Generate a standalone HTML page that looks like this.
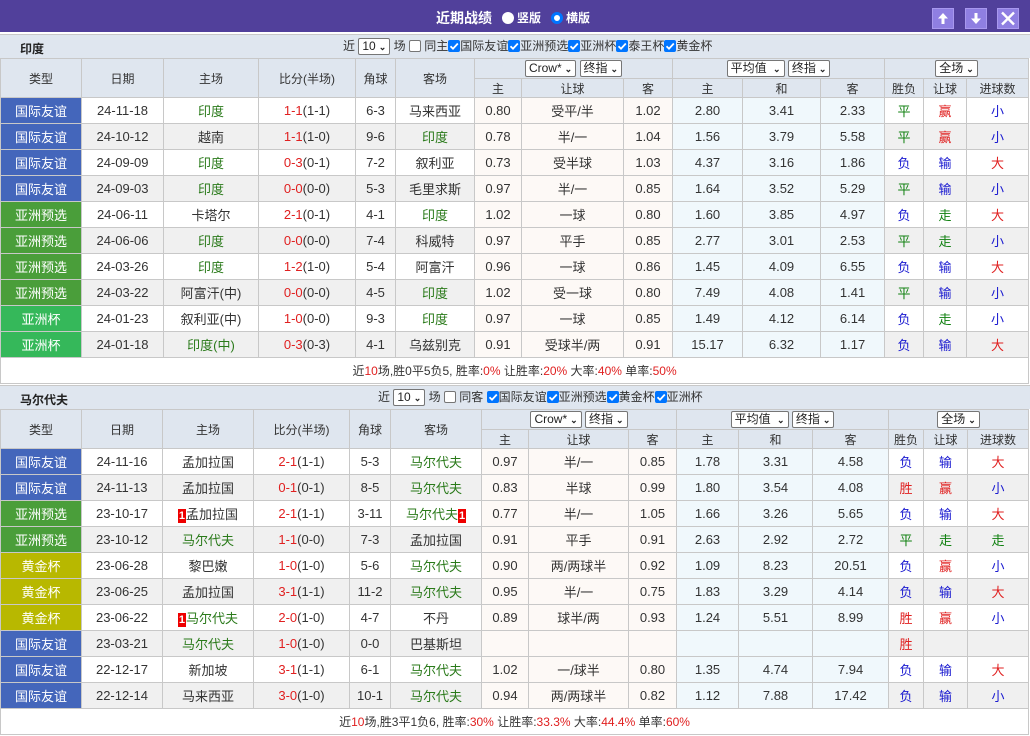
<!DOCTYPE html>
<html><head><meta charset="utf-8">
<style>
*{box-sizing:border-box;margin:0;padding:0}
body{width:1030px;height:736px;background:#fff;font-family:"Liberation Sans","Noto Sans CJK SC",sans-serif;font-size:12px;color:#333;position:relative;overflow:hidden}
.top{position:absolute;left:0;top:0;width:1030px;height:32px;background:#51409b}
.top .t{position:absolute;left:436px;top:8px;color:#fff;font-weight:bold;font-size:14px}
.top .r{position:absolute;top:9px;color:#fff;font-size:12px;font-weight:bold}
.rad{display:inline-block;width:12px;height:12px;border-radius:50%;vertical-align:-2px;margin-right:3px}
.btn{position:absolute;top:8px;width:22px;height:21px;background:#8f7fe2;border:1px solid #a898ee}
.btn svg{display:block}
.bar{position:absolute;left:0;width:1030px;height:24px;background:#dfe6ef;border-top:1px solid #c8c8c8}
.bar b{position:absolute;left:20px;top:5px;font-size:12px;color:#222}
.ctl{position:absolute;top:3px;font-size:12px;color:#333;white-space:nowrap;line-height:17px}
.sel{display:inline-block;border:1px solid #767676;background:#fff;height:17px;line-height:15px;padding:0 3px;font-size:12px;color:#222;border-radius:2px;vertical-align:middle}
.sel i{font-style:normal;font-size:9px;font-weight:bold;margin-left:3px}
.cb{display:inline-block;width:12px;height:12px;vertical-align:-2px;border-radius:2px}
.cb svg{display:block}
.cb.on{background:#0075ff}
.cb.off{border:1px solid #767676;background:#fff}
table{position:absolute;left:0;border-collapse:collapse;table-layout:fixed;width:1028px}
td{border:1px solid #c8c8c8;text-align:center;height:26px;padding:0;white-space:nowrap;overflow:hidden;font-size:13px;color:#333}
tr.h td{background:#dfe6ef;height:20px;color:#333;font-size:12px}
tr.h2 td{height:19px}
tr.g td{background:#f0f0f0}
td.ty{color:#fff!important}
.b1{background:#4466bb!important}.b2{background:#4a9e3a!important}.b3{background:#35b85a!important}.b4{background:#b8b800!important}
td.p{background:#fdf9f6!important}td.q{background:#f0f8fc!important}
.gr{color:#2a7a1a}.rd{color:#e02020}.bl{color:#1a1ad0}.gn{color:#108010}
.sum td{height:26px;background:#fff!important;font-size:12px}
.n{display:inline-block;background:#e00;color:#fff;font-size:11px;font-weight:bold;width:8px;line-height:14px}
</style></head><body>
<div class="top">
<span class="t">近期战绩</span>
<span class="r" style="left:502px"><span class="rad" style="background:#fff"></span>竖版</span>
<span class="r" style="left:551px"><span class="rad" style="background:#fff;border:3px solid #0075ff"></span>横版</span>
<div class="btn" style="left:932px"><svg width="20" height="19"><path d="M10 4L5 9.5H8.5V15H11.5V9.5H15Z" fill="#fff"/></svg></div>
<div class="btn" style="left:965px"><svg width="20" height="19"><path d="M10 15L5 9.5H8.5V4H11.5V9.5H15Z" fill="#fff"/></svg></div>
<div class="btn" style="left:997px"><svg width="20" height="19"><path d="M4 3.5L16 15.5M16 3.5L4 15.5" stroke="#fff" stroke-width="2.4"/></svg></div>
</div>

<div class="bar" style="top:34px"><b>印度</b>
<div class="ctl" style="left:343px">近 <span class="sel">10<i>⌄</i></span> 场 <span class="cb off"></span> 同主<span class="cb on"><svg width="12" height="12"><path d="M2.5 6.2L5 8.7L9.8 3.5" stroke="#fff" stroke-width="1.8" fill="none"/></svg></span>国际友谊<span class="cb on"><svg width="12" height="12"><path d="M2.5 6.2L5 8.7L9.8 3.5" stroke="#fff" stroke-width="1.8" fill="none"/></svg></span>亚洲预选<span class="cb on"><svg width="12" height="12"><path d="M2.5 6.2L5 8.7L9.8 3.5" stroke="#fff" stroke-width="1.8" fill="none"/></svg></span>亚洲杯<span class="cb on"><svg width="12" height="12"><path d="M2.5 6.2L5 8.7L9.8 3.5" stroke="#fff" stroke-width="1.8" fill="none"/></svg></span>泰王杯<span class="cb on"><svg width="12" height="12"><path d="M2.5 6.2L5 8.7L9.8 3.5" stroke="#fff" stroke-width="1.8" fill="none"/></svg></span>黄金杯</div>
</div>

<table style="top:58px">
<colgroup><col style="width:81px"><col style="width:82px"><col style="width:95px"><col style="width:97px"><col style="width:40px"><col style="width:79px"><col style="width:47px"><col style="width:102px"><col style="width:49px"><col style="width:70px"><col style="width:78px"><col style="width:64px"><col style="width:39px"><col style="width:43px"><col style="width:62px"></colgroup>
<tr class="h"><td rowspan="2">类型</td><td rowspan="2">日期</td><td rowspan="2">主场</td><td rowspan="2">比分(半场)</td><td rowspan="2">角球</td><td rowspan="2">客场</td><td colspan="3"><span class="sel">Crow*<i>⌄</i></span> <span class="sel">终指<i>⌄</i></span></td><td colspan="3"><span class="sel">平均值 <i>⌄</i></span> <span class="sel">终指<i>⌄</i></span></td><td colspan="3"><span class="sel">全场<i>⌄</i></span></td></tr>
<tr class="h h2"><td>主</td><td>让球</td><td>客</td><td>主</td><td>和</td><td>客</td><td>胜负</td><td>让球</td><td>进球数</td></tr>
<tr><td class="ty b1">国际友谊</td><td>24-11-18</td><td class="gr">印度</td><td><span class="rd">1-1</span>(1-1)</td><td>6-3</td><td>马来西亚</td><td class="p">0.80</td><td class="p">受平/半</td><td class="p">1.02</td><td class="q">2.80</td><td class="q">3.41</td><td class="q">2.33</td><td class="gn">平</td><td class="rd">赢</td><td class="bl">小</td></tr>
<tr class="g"><td class="ty b1">国际友谊</td><td>24-10-12</td><td>越南</td><td><span class="rd">1-1</span>(1-0)</td><td>9-6</td><td class="gr">印度</td><td class="p">0.78</td><td class="p">半/一</td><td class="p">1.04</td><td class="q">1.56</td><td class="q">3.79</td><td class="q">5.58</td><td class="gn">平</td><td class="rd">赢</td><td class="bl">小</td></tr>
<tr><td class="ty b1">国际友谊</td><td>24-09-09</td><td class="gr">印度</td><td><span class="rd">0-3</span>(0-1)</td><td>7-2</td><td>叙利亚</td><td class="p">0.73</td><td class="p">受半球</td><td class="p">1.03</td><td class="q">4.37</td><td class="q">3.16</td><td class="q">1.86</td><td class="bl">负</td><td class="bl">输</td><td class="rd">大</td></tr>
<tr class="g"><td class="ty b1">国际友谊</td><td>24-09-03</td><td class="gr">印度</td><td><span class="rd">0-0</span>(0-0)</td><td>5-3</td><td>毛里求斯</td><td class="p">0.97</td><td class="p">半/一</td><td class="p">0.85</td><td class="q">1.64</td><td class="q">3.52</td><td class="q">5.29</td><td class="gn">平</td><td class="bl">输</td><td class="bl">小</td></tr>
<tr><td class="ty b2">亚洲预选</td><td>24-06-11</td><td>卡塔尔</td><td><span class="rd">2-1</span>(0-1)</td><td>4-1</td><td class="gr">印度</td><td class="p">1.02</td><td class="p">一球</td><td class="p">0.80</td><td class="q">1.60</td><td class="q">3.85</td><td class="q">4.97</td><td class="bl">负</td><td class="gn">走</td><td class="rd">大</td></tr>
<tr class="g"><td class="ty b2">亚洲预选</td><td>24-06-06</td><td class="gr">印度</td><td><span class="rd">0-0</span>(0-0)</td><td>7-4</td><td>科威特</td><td class="p">0.97</td><td class="p">平手</td><td class="p">0.85</td><td class="q">2.77</td><td class="q">3.01</td><td class="q">2.53</td><td class="gn">平</td><td class="gn">走</td><td class="bl">小</td></tr>
<tr><td class="ty b2">亚洲预选</td><td>24-03-26</td><td class="gr">印度</td><td><span class="rd">1-2</span>(1-0)</td><td>5-4</td><td>阿富汗</td><td class="p">0.96</td><td class="p">一球</td><td class="p">0.86</td><td class="q">1.45</td><td class="q">4.09</td><td class="q">6.55</td><td class="bl">负</td><td class="bl">输</td><td class="rd">大</td></tr>
<tr class="g"><td class="ty b2">亚洲预选</td><td>24-03-22</td><td>阿富汗(中)</td><td><span class="rd">0-0</span>(0-0)</td><td>4-5</td><td class="gr">印度</td><td class="p">1.02</td><td class="p">受一球</td><td class="p">0.80</td><td class="q">7.49</td><td class="q">4.08</td><td class="q">1.41</td><td class="gn">平</td><td class="bl">输</td><td class="bl">小</td></tr>
<tr><td class="ty b3">亚洲杯</td><td>24-01-23</td><td>叙利亚(中)</td><td><span class="rd">1-0</span>(0-0)</td><td>9-3</td><td class="gr">印度</td><td class="p">0.97</td><td class="p">一球</td><td class="p">0.85</td><td class="q">1.49</td><td class="q">4.12</td><td class="q">6.14</td><td class="bl">负</td><td class="gn">走</td><td class="bl">小</td></tr>
<tr class="g"><td class="ty b3">亚洲杯</td><td>24-01-18</td><td class="gr">印度(中)</td><td><span class="rd">0-3</span>(0-3)</td><td>4-1</td><td>乌兹别克</td><td class="p">0.91</td><td class="p">受球半/两</td><td class="p">0.91</td><td class="q">15.17</td><td class="q">6.32</td><td class="q">1.17</td><td class="bl">负</td><td class="bl">输</td><td class="rd">大</td></tr>
<tr class="sum"><td colspan="15">近<span class="rd">10</span>场,胜0平5负5, 胜率:<span class="rd">0%</span> 让胜率:<span class="rd">20%</span> 大率:<span class="rd">40%</span> 单率:<span class="rd">50%</span></td></tr>
</table>

<div class="bar" style="top:385px"><b>马尔代夫</b>
<div class="ctl" style="left:378px">近 <span class="sel">10<i>⌄</i></span> 场 <span class="cb off"></span> 同客 <span class="cb on"><svg width="12" height="12"><path d="M2.5 6.2L5 8.7L9.8 3.5" stroke="#fff" stroke-width="1.8" fill="none"/></svg></span>国际友谊<span class="cb on"><svg width="12" height="12"><path d="M2.5 6.2L5 8.7L9.8 3.5" stroke="#fff" stroke-width="1.8" fill="none"/></svg></span>亚洲预选<span class="cb on"><svg width="12" height="12"><path d="M2.5 6.2L5 8.7L9.8 3.5" stroke="#fff" stroke-width="1.8" fill="none"/></svg></span>黄金杯<span class="cb on"><svg width="12" height="12"><path d="M2.5 6.2L5 8.7L9.8 3.5" stroke="#fff" stroke-width="1.8" fill="none"/></svg></span>亚洲杯</div>
</div>

<table style="top:409px">
<colgroup><col style="width:81px"><col style="width:81px"><col style="width:91px"><col style="width:96px"><col style="width:41px"><col style="width:91px"><col style="width:47px"><col style="width:100px"><col style="width:48px"><col style="width:62px"><col style="width:74px"><col style="width:76px"><col style="width:35px"><col style="width:44px"><col style="width:61px"></colgroup>
<tr class="h"><td rowspan="2">类型</td><td rowspan="2">日期</td><td rowspan="2">主场</td><td rowspan="2">比分(半场)</td><td rowspan="2">角球</td><td rowspan="2">客场</td><td colspan="3"><span class="sel">Crow*<i>⌄</i></span> <span class="sel">终指<i>⌄</i></span></td><td colspan="3"><span class="sel">平均值 <i>⌄</i></span> <span class="sel">终指<i>⌄</i></span></td><td colspan="3"><span class="sel">全场<i>⌄</i></span></td></tr>
<tr class="h h2"><td>主</td><td>让球</td><td>客</td><td>主</td><td>和</td><td>客</td><td>胜负</td><td>让球</td><td>进球数</td></tr>
<tr><td class="ty b1">国际友谊</td><td>24-11-16</td><td>孟加拉国</td><td><span class="rd">2-1</span>(1-1)</td><td>5-3</td><td class="gr">马尔代夫</td><td class="p">0.97</td><td class="p">半/一</td><td class="p">0.85</td><td class="q">1.78</td><td class="q">3.31</td><td class="q">4.58</td><td class="bl">负</td><td class="bl">输</td><td class="rd">大</td></tr>
<tr class="g"><td class="ty b1">国际友谊</td><td>24-11-13</td><td>孟加拉国</td><td><span class="rd">0-1</span>(0-1)</td><td>8-5</td><td class="gr">马尔代夫</td><td class="p">0.83</td><td class="p">半球</td><td class="p">0.99</td><td class="q">1.80</td><td class="q">3.54</td><td class="q">4.08</td><td class="rd">胜</td><td class="rd">赢</td><td class="bl">小</td></tr>
<tr><td class="ty b2">亚洲预选</td><td>23-10-17</td><td><span class="n">1</span>孟加拉国</td><td><span class="rd">2-1</span>(1-1)</td><td>3-11</td><td class="gr">马尔代夫<span class="n">1</span></td><td class="p">0.77</td><td class="p">半/一</td><td class="p">1.05</td><td class="q">1.66</td><td class="q">3.26</td><td class="q">5.65</td><td class="bl">负</td><td class="bl">输</td><td class="rd">大</td></tr>
<tr class="g"><td class="ty b2">亚洲预选</td><td>23-10-12</td><td class="gr">马尔代夫</td><td><span class="rd">1-1</span>(0-0)</td><td>7-3</td><td>孟加拉国</td><td class="p">0.91</td><td class="p">平手</td><td class="p">0.91</td><td class="q">2.63</td><td class="q">2.92</td><td class="q">2.72</td><td class="gn">平</td><td class="gn">走</td><td class="gn">走</td></tr>
<tr><td class="ty b4">黄金杯</td><td>23-06-28</td><td>黎巴嫩</td><td><span class="rd">1-0</span>(1-0)</td><td>5-6</td><td class="gr">马尔代夫</td><td class="p">0.90</td><td class="p">两/两球半</td><td class="p">0.92</td><td class="q">1.09</td><td class="q">8.23</td><td class="q">20.51</td><td class="bl">负</td><td class="rd">赢</td><td class="bl">小</td></tr>
<tr class="g"><td class="ty b4">黄金杯</td><td>23-06-25</td><td>孟加拉国</td><td><span class="rd">3-1</span>(1-1)</td><td>11-2</td><td class="gr">马尔代夫</td><td class="p">0.95</td><td class="p">半/一</td><td class="p">0.75</td><td class="q">1.83</td><td class="q">3.29</td><td class="q">4.14</td><td class="bl">负</td><td class="bl">输</td><td class="rd">大</td></tr>
<tr><td class="ty b4">黄金杯</td><td>23-06-22</td><td class="gr"><span class="n">1</span>马尔代夫</td><td><span class="rd">2-0</span>(1-0)</td><td>4-7</td><td>不丹</td><td class="p">0.89</td><td class="p">球半/两</td><td class="p">0.93</td><td class="q">1.24</td><td class="q">5.51</td><td class="q">8.99</td><td class="rd">胜</td><td class="rd">赢</td><td class="bl">小</td></tr>
<tr class="g"><td class="ty b1">国际友谊</td><td>23-03-21</td><td class="gr">马尔代夫</td><td><span class="rd">1-0</span>(1-0)</td><td>0-0</td><td>巴基斯坦</td><td class="p"></td><td class="p"></td><td class="p"></td><td class="q"></td><td class="q"></td><td class="q"></td><td class="rd">胜</td><td></td><td></td></tr>
<tr><td class="ty b1">国际友谊</td><td>22-12-17</td><td>新加坡</td><td><span class="rd">3-1</span>(1-1)</td><td>6-1</td><td class="gr">马尔代夫</td><td class="p">1.02</td><td class="p">一/球半</td><td class="p">0.80</td><td class="q">1.35</td><td class="q">4.74</td><td class="q">7.94</td><td class="bl">负</td><td class="bl">输</td><td class="rd">大</td></tr>
<tr class="g"><td class="ty b1">国际友谊</td><td>22-12-14</td><td>马来西亚</td><td><span class="rd">3-0</span>(1-0)</td><td>10-1</td><td class="gr">马尔代夫</td><td class="p">0.94</td><td class="p">两/两球半</td><td class="p">0.82</td><td class="q">1.12</td><td class="q">7.88</td><td class="q">17.42</td><td class="bl">负</td><td class="bl">输</td><td class="bl">小</td></tr>
<tr class="sum"><td colspan="15">近<span class="rd">10</span>场,胜3平1负6, 胜率:<span class="rd">30%</span> 让胜率:<span class="rd">33.3%</span> 大率:<span class="rd">44.4%</span> 单率:<span class="rd">60%</span></td></tr>
</table>
</body></html>
